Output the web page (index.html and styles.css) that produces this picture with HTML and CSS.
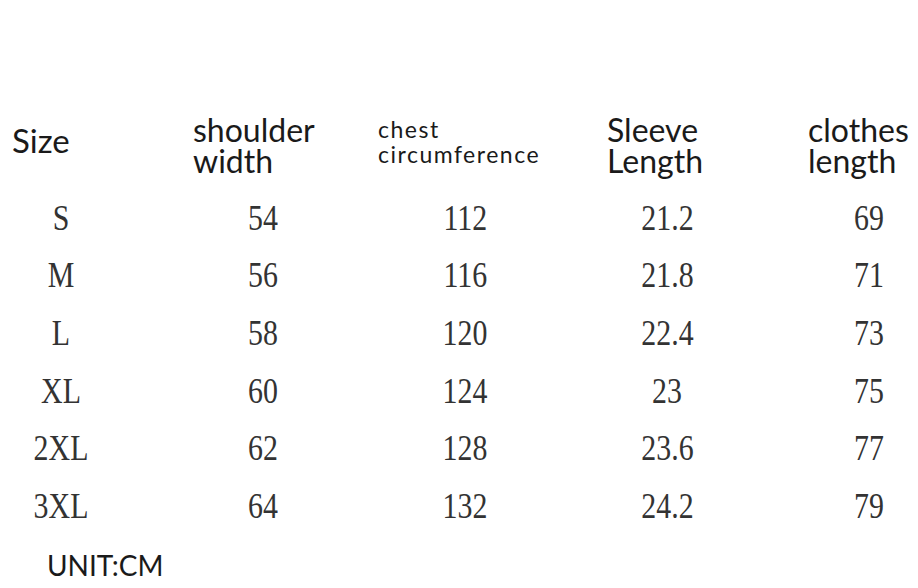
FILE: index.html
```html
<!DOCTYPE html>
<html>
<head>
<meta charset="utf-8">
<link rel="stylesheet" href="styles.css">
</head>
<body>
<div class="page">
  <div class="head">
    <div class="h h-size">Size</div>
    <div class="h h-shoulder">shoulder<br>width</div>
    <div class="h h-chest">chest<br>circumference</div>
    <div class="h h-sleeve">Sleeve<br>Length</div>
    <div class="h h-clothes">clothes<br>length</div>
  </div>
  <div class="rows">
    <div class="row"><span>S</span><span>54</span><span>112</span><span>21.2</span><span>69</span></div>
    <div class="row"><span>M</span><span>56</span><span>116</span><span>21.8</span><span>71</span></div>
    <div class="row"><span>L</span><span>58</span><span>120</span><span>22.4</span><span>73</span></div>
    <div class="row"><span>XL</span><span>60</span><span>124</span><span>23</span><span>75</span></div>
    <div class="row"><span>2XL</span><span>62</span><span>128</span><span>23.6</span><span>77</span></div>
    <div class="row"><span>3XL</span><span>64</span><span>132</span><span>24.2</span><span>79</span></div>
  </div>
  <div class="unit">UNIT:CM</div>
</div>
</body>
</html>
```
FILE: styles.css
```css
html, body {
  margin: 0;
  padding: 0;
  background: #ffffff;
  width: 918px;
  height: 588px;
  overflow: hidden;
}
.page {
  display: flex;
  flex-direction: column;
  padding-top: 114px;
}
.head {
  display: grid;
  grid-template-columns: 181px 185px 229px 201px 110px;
  padding-left: 12px;
  height: 75px;
  font-family: "Lato", "Liberation Sans", sans-serif;
  color: #1a1a1a;
}
.h {
  font-size: 32px;
  line-height: 31px;
}
.h-size {
  font-size: 33px;
  padding-top: 11px;
}
.h-chest {
  font-size: 23px;
  line-height: 25px;
  letter-spacing: 1.5px;
  padding-top: 3px;
}
.rows {
  display: flex;
  flex-direction: column;
  margin-left: -40px;
}
.row {
  display: grid;
  grid-template-columns: repeat(5, 202px);
  height: 57.6px;
  align-items: center;
  justify-items: center;
  font-family: "Liberation Serif", "Times New Roman", serif;
  font-size: 36px;
  color: #333333;
}
.row span {
  display: inline-block;
  transform: scaleX(0.83);
  line-height: 1;
}
.unit {
  font-family: "Lato", "Liberation Sans", sans-serif;
  font-size: 28px;
  color: #1a1a1a;
  padding-left: 47px;
  margin-top: 13px;
}
```
